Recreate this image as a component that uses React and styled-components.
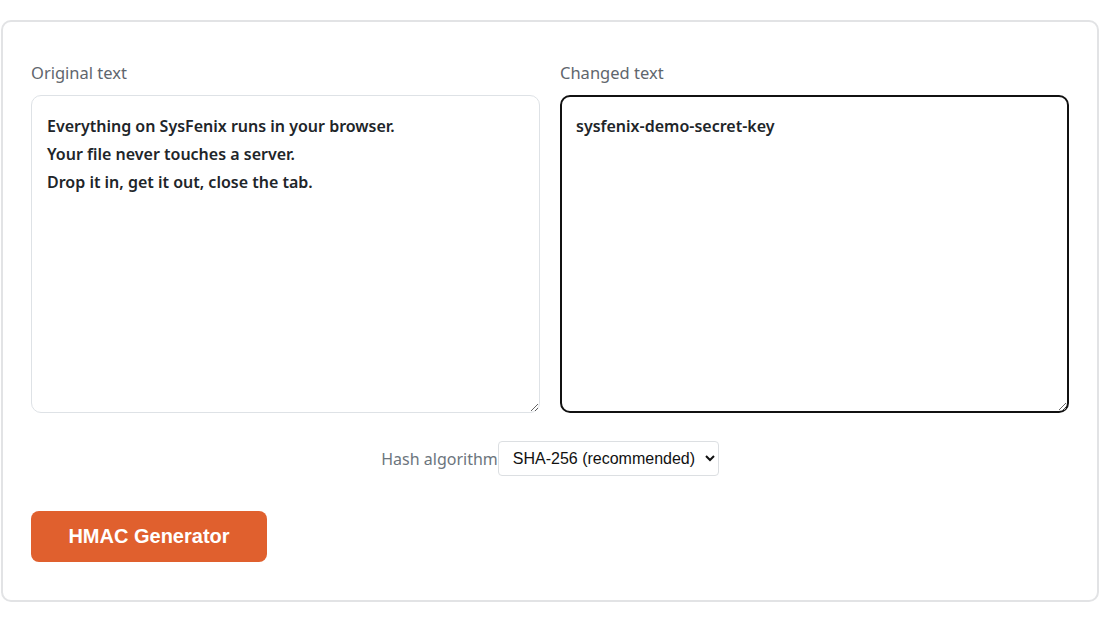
import React, { useState } from "react";
import styled, { createGlobalStyle } from "styled-components";

const GlobalStyle = createGlobalStyle`
  * { box-sizing: border-box; }
  body {
    margin: 0;
    background: #ffffff;
    font-family: "Noto Sans", "Open Sans", sans-serif;
  }
`;

const Page = styled.div`
  padding: 20px 1px 17px 1px;
`;

const Card = styled.section`
  border: 2px solid #e2e3e5;
  border-radius: 10px;
  padding: 39px 28px 38px 28px;
  background: #fff;
`;

const Columns = styled.div`
  display: grid;
  grid-template-columns: 1fr 1fr;
  column-gap: 20px;
`;

const Field = styled.div`
  display: flex;
  flex-direction: column;
`;

const Label = styled.label`
  font-size: 16.5px;
  line-height: 24px;
  color: #5f666d;
  margin-bottom: 10px;
`;

const TextBox = styled.textarea`
  height: 318px;
  width: 100%;
  resize: vertical;
  font-family: "Noto Sans", "Open Sans", sans-serif;
  font-size: 16px;
  font-weight: 600;
  line-height: 28px;
  color: #212529;
  border-radius: 10px;
  outline: none;
  border: ${(p) => (p.$active ? "2px solid #111" : "1px solid #dee2e6")};
  padding: ${(p) => (p.$active ? "15px 14px" : "16px 15px")};
`;

const OptionsRow = styled.div`
  display: flex;
  justify-content: center;
  align-items: center;
  margin-top: 28px;
`;

const OptionLabel = styled.label`
  font-size: 16px;
  color: #6c757d;
  font-weight: 400;
`;

const Select = styled.select`
  height: 35px;
  padding: 0 6px 0 10px;
  font-family: "Liberation Sans", Arial, sans-serif;
  font-size: 16px;
  color: #111;
  background: #fff;
  border: 1px solid #dcdfe2;
  border-radius: 4px;
`;

const Actions = styled.div`
  margin-top: 35px;
  display: flex;
`;

const PrimaryButton = styled.button`
  width: 236px;
  height: 51px;
  border: none;
  border-radius: 8px;
  background: #e0602e;
  color: #fff;
  font-family: "Liberation Sans", Arial, sans-serif;
  font-weight: 700;
  font-size: 20px;
  cursor: pointer;
`;

export default function App() {
  const [original, setOriginal] = useState(
    "Everything on SysFenix runs in your browser.\nYour file never touches a server.\nDrop it in, get it out, close the tab."
  );
  const [changed, setChanged] = useState("sysfenix-demo-secret-key");
  const [algo, setAlgo] = useState("sha256");

  return (
    <Page>
      <GlobalStyle />
      <Card>
        <Columns>
          <Field>
            <Label htmlFor="original">Original text</Label>
            <TextBox
              id="original"
              value={original}
              onChange={(e) => setOriginal(e.target.value)}
            />
          </Field>
          <Field>
            <Label htmlFor="changed">Changed text</Label>
            <TextBox
              id="changed"
              $active
              value={changed}
              onChange={(e) => setChanged(e.target.value)}
            />
          </Field>
        </Columns>
        <OptionsRow>
          <OptionLabel htmlFor="algo">Hash algorithm</OptionLabel>
          <Select id="algo" value={algo} onChange={(e) => setAlgo(e.target.value)}>
            <option value="sha256">SHA-256 (recommended)</option>
            <option value="sha1">SHA-1</option>
            <option value="sha384">SHA-384</option>
            <option value="sha512">SHA-512</option>
          </Select>
        </OptionsRow>
        <Actions>
          <PrimaryButton type="button">HMAC Generator</PrimaryButton>
        </Actions>
      </Card>
    </Page>
  );
}
